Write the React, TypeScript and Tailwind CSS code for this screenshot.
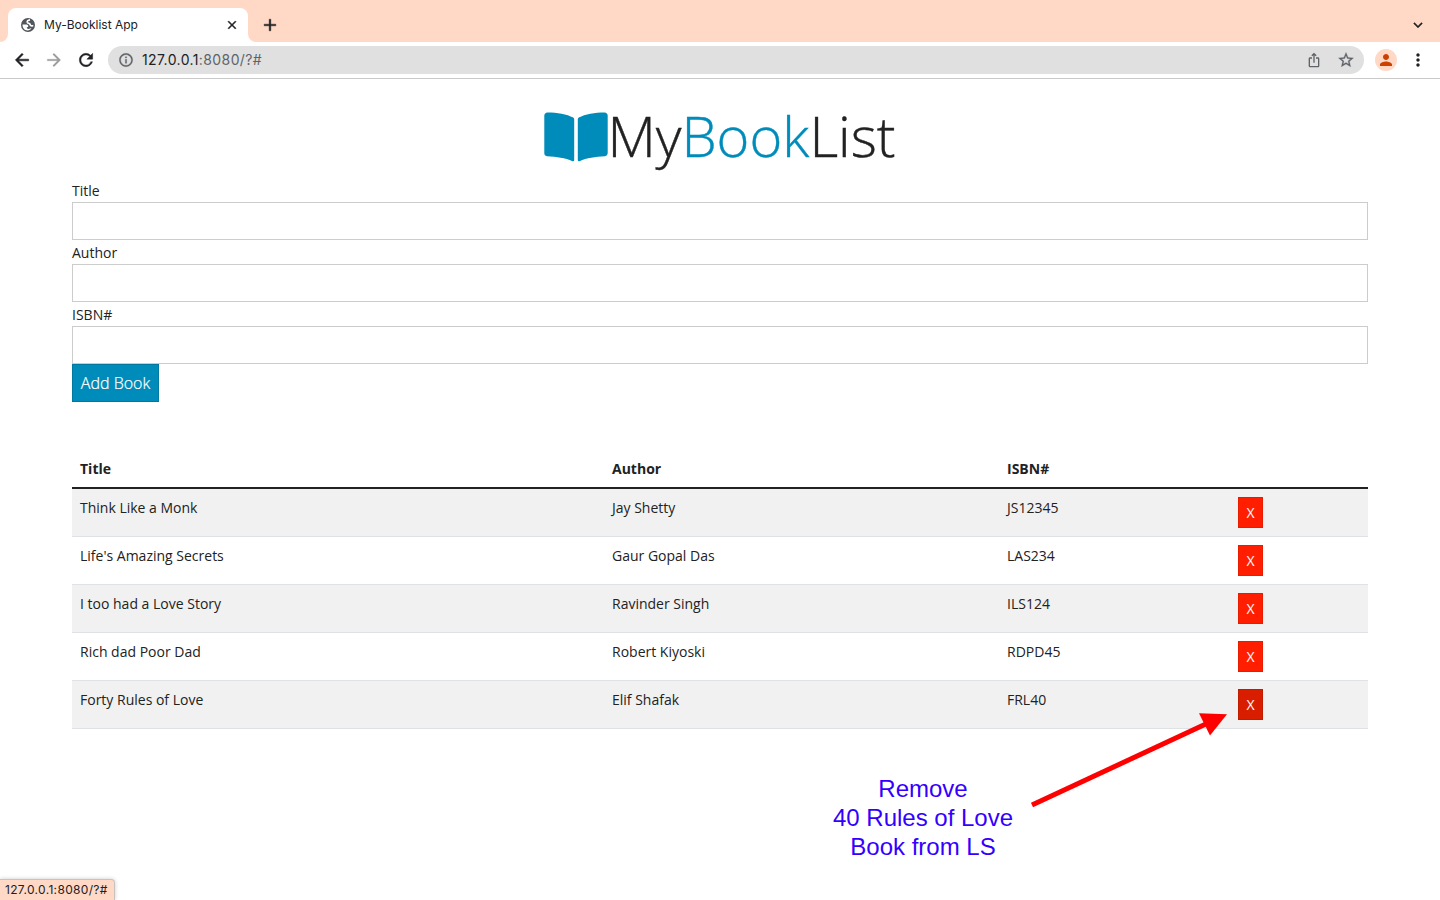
import React from "react";
import {
  MdAdd,
  MdArrowBack,
  MdArrowForward,
  MdClose,
  MdInfoOutline,
  MdIosShare,
  MdKeyboardArrowDown,
  MdMoreVert,
  MdPerson,
  MdRefresh,
  MdStarBorder,
} from "react-icons/md";

type Book = { title: string; author: string; isbn: string; active?: boolean };

const books: Book[] = [
  { title: "Think Like a Monk", author: "Jay Shetty", isbn: "JS12345" },
  { title: "Life's Amazing Secrets", author: "Gaur Gopal Das", isbn: "LAS234" },
  { title: "I too had a Love Story", author: "Ravinder Singh", isbn: "ILS124" },
  { title: "Rich dad Poor Dad", author: "Robert Kiyoski", isbn: "RDPD45" },
  { title: "Forty Rules of Love", author: "Elif Shafak", isbn: "FRL40", active: true },
];

function Globe() {
  return (
    <svg viewBox="0 0 14 14" className="h-[14px] w-[14px]">
      <circle cx="7" cy="7" r="7" fill="#51565b" />
      <g fill="none" stroke="#fff" strokeWidth="1.700">
        <path d="M9 1.900C7 2.200 6 3 6.300 4.200c.3 1 1.500.9 2.200 1.500.8.700.5 1.700 1.600 2.100.9.300 1.500-.2 2.200-.3" />
      </g>
      <path d="M1.500 6.600h3.400c1.600 0 2.400.7 2.400 1.600 0 .8-.9 1-1.600 1.100.2 1 .6 1.500 1.600 1.600 1.300.1 2.300-.5 3.200-1.200-.7 1.700-2 2.700-3.900 2.800-3.200 0-5.200-2.700-5.100-5.900z" fill="#fff" />
    </svg>
  );
}

function BookIcon() {
  return (
    <svg viewBox="0 0 64 50" className="h-[50px] w-16 fill-[#008cba]">
      <path d="M3.500.4C13 .4 23 2 29.200 5.500Q30.200 6.200 30.200 7.500V48Q30.200 49.800 28.500 49.200C21 45.800 13 44.700 3 44.200Q.3 43.800.3 41.300V3.500Q.5.700 3.500.4Z" />
      <path d="M60.500.4C51 .4 41 2 34.800 5.500Q33.800 6.200 33.800 7.500V48Q33.800 49.800 35.500 49.200C43 45.800 51 44.700 61 44.200Q63.700 43.800 63.700 41.300V3.500Q63.500.7 60.500.4Z" />
    </svg>
  );
}

function Browser() {
  return (
    <header className="font-[Inter,sans-serif] [&_path[fill=none]]:stroke-none">
      <div className="flex h-[42px] items-end bg-[#ffd9c6]">
        <svg viewBox="0 0 8 8" className="h-2 w-2 fill-white">
          <path d="M8 0V8H0A8 8 0 0 0 8 0Z" />
        </svg>
        <div className="flex h-[34px] w-60 items-center rounded-t-lg bg-white pr-[9px] pl-[13px]">
          <Globe />
          <span className="ml-[9px] flex-1 text-[12px] text-[#202124]">My-Booklist App</span>
          <MdClose className="h-[14px] w-[14px] stroke-[#202124] stroke-[0.8] text-[#202124]" />
        </div>
        <svg viewBox="0 0 8 8" className="h-2 w-2 fill-white">
          <path d="M0 0V8H8A8 8 0 0 1 0 0Z" />
        </svg>
        <div className="flex h-[34px] flex-1 items-center justify-between pr-[13px] pl-1">
          <MdAdd className="h-5 w-5 stroke-[#202124] stroke-[0.5] text-[#202124]" />
          <MdKeyboardArrowDown className="h-[18px] w-[18px] stroke-[#202124] stroke-[0.4] text-[#202124]" />
        </div>
      </div>
      <div className="flex h-[37px] items-center border-b border-[#c9c9c9] pl-3">
        <MdArrowBack className="h-5 w-5 stroke-[#202124] stroke-[0.6] text-[#202124]" />
        <MdArrowForward className="ml-3 h-5 w-5 stroke-[#9b9b9b] stroke-[0.3] text-[#9b9b9b]" />
        <MdRefresh className="ml-3 h-5 w-5 stroke-[#202124] stroke-[0.5] text-[#202124]" />
        <div className="ml-3 flex h-7 w-[1256px] items-center rounded-full bg-[#e0e0e0] pr-[9px] pl-[10px] text-[#5f6368]">
          <MdInfoOutline className="h-4 w-4 stroke-[#5f6368] stroke-[0.4]" />
          <span className="ml-2 flex-1 pb-px text-[14px] tracking-[0.4px]">
            <span className="text-[#202124]">127.0.0.1</span>:8080/?#
          </span>
          <MdIosShare className="h-4 w-4" />
          <MdStarBorder className="ml-[15px] h-[18px] w-[18px] stroke-[#5f6368] stroke-[0.4]" />
        </div>
        <div className="ml-[11px] flex h-[22px] w-[22px] items-center justify-center rounded-full bg-[#ffd9c6]">
          <MdPerson className="h-[18px] w-[18px] text-[#cc4000]" />
        </div>
        <MdMoreVert className="ml-[11px] h-5 w-5 text-[#202124]" />
      </div>
    </header>
  );
}

function Field({ label }: { label: string }) {
  return (
    <label className="block">
      <span className="block h-6 leading-[26px]">{label}</span>
      <input className="block h-[38px] w-full border border-[#cccccc] bg-white px-3 outline-none" />
    </label>
  );
}

export default function App() {
  return (
    <div className="relative h-[900px] w-[1440px] overflow-hidden bg-white">
      <Browser />
      <main className="px-[72px] pt-6 font-['Open_Sans',sans-serif] text-[14px] leading-[22px] text-[#222222]">
        <h1 className="flex h-[75px] justify-center text-[56px] leading-[64px] font-light [-webkit-text-stroke:0.4px]">
          <span className="mt-[9px] -mr-px">
            <BookIcon />
          </span>
          <span>
            My<span className="text-[#008cba]">Book</span>List
          </span>
        </h1>
        <form>
          <Field label="Title" />
          <Field label="Author" />
          <Field label="ISBN#" />
          <button
            type="button"
            className="block h-[38px] w-[87px] border border-[#0079a1] bg-[#008cba] text-[16px] font-light whitespace-nowrap text-white [-webkit-text-stroke:0.2px]"
          >
            Add Book
          </button>
        </form>
        <table className="mt-12 w-full table-fixed border-separate border-spacing-0 text-left">
          <colgroup>
            <col className="w-[532px]" />
            <col className="w-[395px]" />
            <col className="w-[231px]" />
            <col className="w-[138px]" />
          </colgroup>
          <thead>
            <tr className="h-[39px]">
              {["Title", "Author", "ISBN#", ""].map((heading, i) => (
                <th key={i} className="border-b-2 border-[#222222] px-2 pt-2 pb-[7px] align-top font-bold">
                  {heading}
                </th>
              ))}
            </tr>
          </thead>
          <tbody>
            {books.map((book) => (
              <tr key={book.isbn} className="h-12 odd:bg-[#f1f1f1] [&>td]:border-b [&>td]:border-[#dee2e6] [&>td]:px-2 [&>td]:pt-2 [&>td]:align-top">
                <td>{book.title}</td>
                <td>{book.author}</td>
                <td>{book.isbn}</td>
                <td>
                  <a
                    className={
                      book.active
                        ? "flex h-[31px] w-[25px] items-center justify-center border border-[#c11b00] bg-[#d91e00]"
                        : "flex h-[31px] w-[25px] items-center justify-center border border-[#ea1c00] bg-[#ff1f00]"
                    }
                  >
                    <span className="text-white">X</span>
                  </a>
                </td>
              </tr>
            ))}
          </tbody>
        </table>
      </main>
      <svg viewBox="0 0 200 100" className="absolute top-[710px] left-[1030px] h-[100px] w-[200px]">
        <path d="M2 95L178 13" stroke="#ff0000" strokeWidth="5" />
        <path d="M169 3.300L197 4.200L180 25.500Z" fill="#ff0000" />
      </svg>
      <p className="absolute top-[774px] left-[823px] w-[200px] text-center font-['Liberation_Sans',sans-serif] text-[24px] leading-[29px] text-[#3300ff]">
        Remove
        <br />
        40 Rules of Love
        <br />
        Book from LS
      </p>
      <div className="absolute bottom-0 left-0 flex h-[21px] w-[115px] items-center rounded-tr border-t border-r border-[#c9c3c0] bg-[#ffd9c6] pl-[5px] font-[Inter,sans-serif] text-[12px] tracking-[0.33px] text-[#202124] shadow-[0_0_4px_rgba(0,0,0,0.2)]">
        127.0.0.1:8080/?#
      </div>
    </div>
  );
}
